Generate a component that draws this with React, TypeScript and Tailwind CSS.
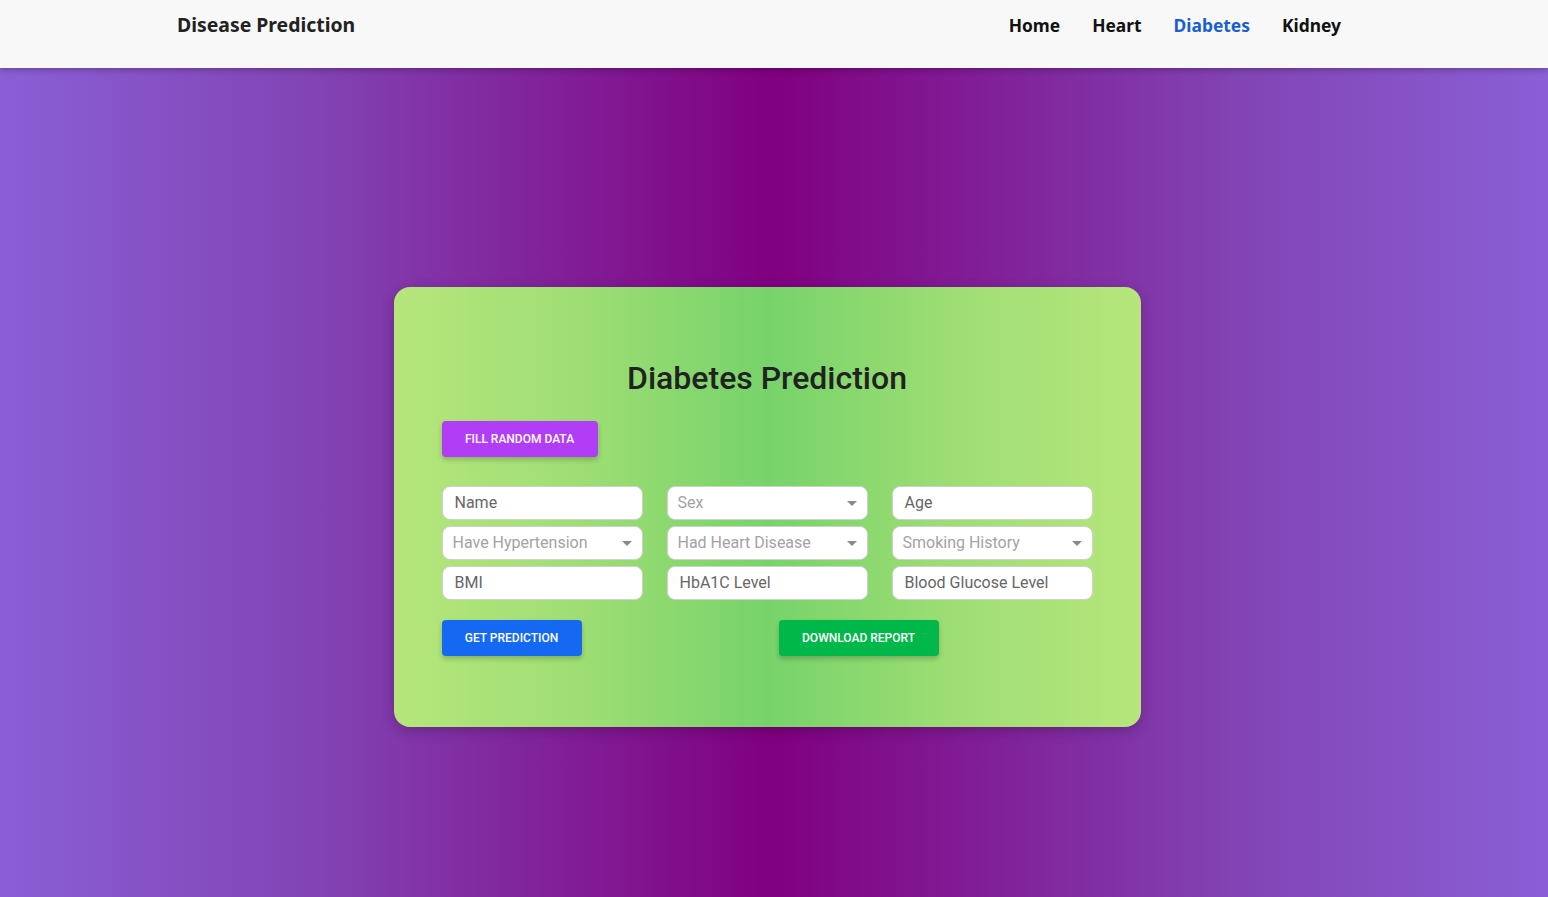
import React from 'react'

const NAV = ['Home', 'Heart', 'Diabetes', 'Kidney']

function TextField({ label }: { label: string }) {
  return (
    <div className="h-[34px] w-[201px] rounded-lg border border-[#cfcfcf] bg-white px-3 flex items-center text-[16px] text-[#666]">
      {label}
    </div>
  )
}

function SelectField({ label }: { label: string }) {
  return (
    <div className="h-[34px] w-[201px] rounded-lg border border-[#cfcfcf] bg-white pl-[10px] pr-[10px] flex items-center justify-between text-[16px] text-[#a3a3a3]">
      <span>{label}</span>
      <span className="w-0 h-0 border-l-[5px] border-r-[5px] border-t-[5px] border-l-transparent border-r-transparent border-t-[#8a8a8a]" />
    </div>
  )
}

export default function App() {
  return (
    <div className="min-h-[897px] flex flex-col bg-[linear-gradient(90deg,#8a5fd6_0%,#8244b4_20%,#800080_50%,#8244b4_80%,#8a5fd6_100%)] font-['Roboto',sans-serif]">
      <header className="h-[68px] bg-[#f8f8f8] shadow-[0_2px_6px_rgba(0,0,0,0.25)] flex justify-between pl-[177px] pr-[207px] pt-[12px] font-['Noto_Sans',sans-serif] font-bold">
        <div className="text-[19.4px] leading-[26px] text-[#222]">Disease Prediction</div>
        <nav className="flex gap-[32px] text-[17.4px] leading-[26px]">
          {NAV.map(n => (
            <span key={n} className={n === 'Diabetes' ? 'text-[#1a5fd0]' : 'text-[#111]'}>{n}</span>
          ))}
        </nav>
      </header>

      <main className="flex justify-center pt-[219px] pr-[14px]">
        <div className="w-[747px] h-[440px] rounded-[16px] shadow-[0_4px_14px_rgba(0,0,0,0.2)] bg-[linear-gradient(90deg,#b6e67b_0%,#9ede74_25%,#76d36a_50%,#9ede74_75%,#b6e67b_100%)] px-[48px] pt-[70px]">
          <h1 className="text-center text-[32px] leading-[42px] font-medium text-[#222]">Diabetes Prediction</h1>
          <button className="mt-[22px] h-[36px] w-[156px] rounded-[4px] bg-[#b13df7] text-white text-[12px] font-medium shadow-[0_3px_5px_rgba(0,0,0,0.2)]">
            FILL RANDOM DATA
          </button>
          <div className="mt-[29px] grid grid-cols-[201px_201px_201px] gap-x-[24px] gap-y-[6px]">
            <TextField label="Name" />
            <SelectField label="Sex" />
            <TextField label="Age" />
            <SelectField label="Have Hypertension" />
            <SelectField label="Had Heart Disease" />
            <SelectField label="Smoking History" />
            <TextField label="BMI" />
            <TextField label="HbA1C Level" />
            <TextField label="Blood Glucose Level" />
          </div>
          <div className="mt-[20px] flex gap-[197px]">
            <button className="h-[36px] w-[140px] rounded-[4px] bg-[#1468f2] text-white text-[12px] font-medium shadow-[0_3px_5px_rgba(0,0,0,0.2)]">
              GET PREDICTION
            </button>
            <button className="h-[36px] w-[160px] rounded-[4px] bg-[#00b84a] text-white text-[12px] font-medium shadow-[0_3px_5px_rgba(0,0,0,0.2)]">
              DOWNLOAD REPORT
            </button>
          </div>
        </div>
      </main>
    </div>
  )
}
